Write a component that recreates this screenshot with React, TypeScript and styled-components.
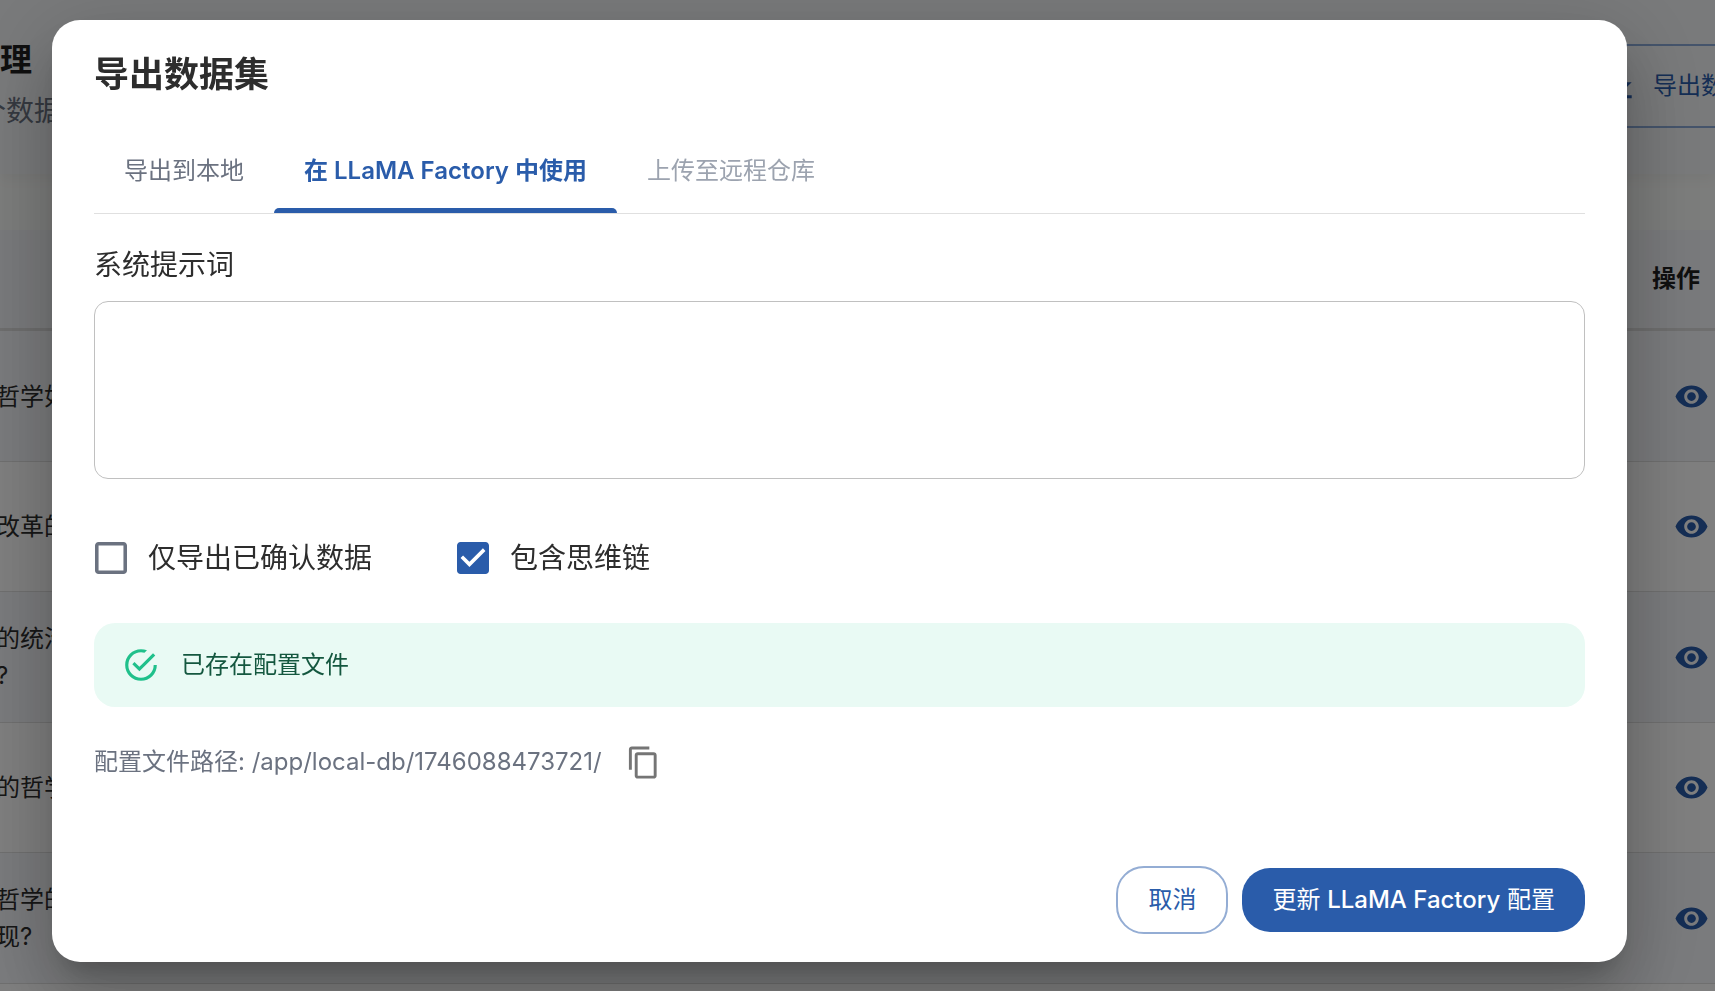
import React, { useState } from "react";
import styled, { createGlobalStyle } from "styled-components";

const fonts = `Inter, "Noto Sans CJK SC", sans-serif`;
const primary = "#2a5caa";

const GlobalStyle = createGlobalStyle`
  *, *::before, *::after { box-sizing: border-box; }
  body {
    margin: 0;
    background: #f9faf8;
    color: #2d2d2d;
    font-family: ${fonts};
    font-size: 24px;
    line-height: 36px;
    overflow: hidden;
  }
  button, input, textarea { font-family: inherit; line-height: inherit; }
`;

/* ---------- page behind the dialog ---------- */

const Page = styled.main`
  height: 100vh;
  overflow: hidden;
`;

const PageHeader = styled.header`
  display: flex;
  justify-content: space-between;
  align-items: flex-start;
  height: 174px;
  background: #f2f4f6;
  box-shadow: 0 4px 14px rgba(0, 0, 0, 0.05);
`;

const Heading = styled.div`
  display: flex;
  flex-direction: column;
  align-items: flex-end;
  width: 62px;
  padding-top: 36px;
  white-space: nowrap;
`;

const PageTitle = styled.h1`
  width: 62px;
  margin: 0;
  font-size: 32px;
  line-height: 48px;
  font-weight: 700;
  color: #1f1f1f;
`;

const PageSubtitle = styled.p`
  margin: 0;
  font-size: 28px;
  line-height: 54px;
  color: #6b7280;
`;

const HeaderAction = styled.button`
  display: flex;
  align-items: center;
  gap: 14px;
  width: 140px;
  height: 84px;
  margin: 44px 0 0;
  padding: 0 0 0 27px;
  border: solid #8aa8d6;
  border-width: 2px 0 2px 2px;
  border-radius: 21px 0 0 21px;
  background: transparent;
  color: ${primary};
  font-size: 24px;
  white-space: nowrap;
  overflow: hidden;

  svg { flex: none; }
`;

const DataTable = styled.table`
  width: calc(100% + 4px);
  margin: 56px 0 0 -4px;
  border-collapse: separate;
  border-spacing: 0;
  table-layout: fixed;
`;

const HeadCell = styled.th`
  height: 101px;
  padding: 0 0 0 28px;
  border-bottom: 3px solid #dcdcdc;
  background: #f3f5f8;
  text-align: left;
  font-weight: 700;
  color: #1f1f1f;
`;

const ActionHeadCell = styled(HeadCell)`
  width: 91px;
`;

const Row = styled.tr`
  height: 130px;
  background: #ffffff;

  &:nth-child(odd) {
    height: 131px;
    background: #f5f7fa;
  }
`;

const Cell = styled.td`
  padding: 0;
  border-bottom: 1px solid #dfdfdf;
  line-height: 37px;
`;

const ActionCell = styled(Cell)`
  padding-left: 41px;
`;

const RowButton = styled.button`
  display: flex;
  padding: 9px 0 9px 9px;
  border: 0;
  background: transparent;
  color: ${primary};

  svg { flex: none; }
`;

/* ---------- dialog ---------- */

const Overlay = styled.div`
  position: fixed;
  inset: 0;
  padding: 20px 88px 0 52px;
  background: rgba(0, 0, 0, 0.5);
`;

const Dialog = styled.section`
  display: flex;
  flex-direction: column;
  padding: 28px 42px;
  border-radius: 28px;
  background: #ffffff;
  box-shadow:
    0 19px 26px -12px rgba(0, 0, 0, 0.2),
    0 42px 66px 5px rgba(0, 0, 0, 0.14),
    0 16px 80px 14px rgba(0, 0, 0, 0.12);
`;

const DialogTitle = styled.h2`
  margin: 0 0 29px;
  font-size: 35px;
  line-height: 52px;
  font-weight: 700;
`;

const Tabs = styled.div`
  display: flex;
  margin-bottom: 30px;
  border-bottom: 1px solid #e0e0e0;
`;

const Tab = styled.button<{ $active?: boolean }>`
  position: relative;
  height: 84px;
  padding: 0 30px;
  border: 0;
  background: transparent;
  font-size: 24px;
  font-weight: ${(p) => (p.$active ? 600 : 400)};
  color: ${(p) => (p.$active ? primary : "#6b7280")};

  &:disabled { color: #9ca3af; }

  &::after {
    content: "";
    display: ${(p) => (p.$active ? "block" : "none")};
    position: absolute;
    left: 0;
    right: 0;
    bottom: 0;
    height: 5px;
    border-radius: 5px 5px 0 0;
    background: ${primary};
  }
`;

const FieldLabel = styled.label`
  margin-bottom: 15px;
  font-size: 28px;
  line-height: 42px;
`;

const PromptInput = styled.textarea`
  display: block;
  width: 100%;
  height: 178px;
  padding: 14px 24px;
  border: 1px solid #c0c0c0;
  border-radius: 14px;
  background: #ffffff;
  color: inherit;
  font-size: 28px;
  resize: none;
`;

const Options = styled.div`
  display: flex;
  gap: 85px;
  margin: 58px 0 44px;
  padding-left: 1px;
`;

const Option = styled.label`
  display: flex;
  align-items: center;
  gap: 21px;
  font-size: 28px;
  line-height: 42px;
`;

const CheckHolder = styled.span`
  position: relative;
  display: flex;
`;

const CheckInput = styled.input`
  appearance: none;
  width: 32px;
  height: 32px;
  margin: 0;
`;

const CheckMark = styled.svg<{ $checked: boolean }>`
  position: absolute;
  inset: 0;
  color: ${(p) => (p.$checked ? primary : "#6b7280")};
  pointer-events: none;
`;

const Alert = styled.div`
  display: flex;
  align-items: center;
  gap: 21px;
  height: 84px;
  padding: 0 28px;
  border-radius: 21px;
  background: #e9faf4;
  color: #14573f;

  svg { color: #20c08b; }
`;

const PathRow = styled.div`
  display: flex;
  align-items: center;
  gap: 24px;
  height: 56px;
  margin: 27px 0 76px;
  color: #6b7280;
`;

const CopyButton = styled.button`
  display: flex;
  padding: 9px 0;
  border: 0;
  background: transparent;
  color: #757575;
`;

const Footer = styled.footer`
  display: flex;
  justify-content: flex-end;
  align-items: center;
  gap: 14px;
`;

const FooterButton = styled.button`
  height: 68px;
  padding: 0 30px;
  border: 2px solid #94add4;
  border-radius: 28px;
  background: #ffffff;
  color: ${primary};
  font-size: 24px;
`;

const PrimaryButton = styled(FooterButton)`
  height: 64px;
  border: 0;
  background: ${primary};
  color: #ffffff;
`;

const ProductName = styled.span`
  font-weight: 500;
`;

type IconProps = { d: string; size: number };

const Icon = ({ d, size }: IconProps) => (
  <svg width={size} height={size} viewBox="0 0 24 24" fill="currentColor" aria-hidden="true">
    <path d={d} />
  </svg>
);

const icons = {
  download: "M19 9h-4V3H9v6H5l7 7 7-7zM5 18v2h14v-2H5z",
  eye: "M12 4.5C7 4.5 2.73 7.61 1 12c1.73 4.39 6 7.5 11 7.5s9.27-3.11 11-7.5c-1.73-4.39-6-7.5-11-7.5zM12 17c-2.76 0-5-2.24-5-5s2.24-5 5-5 5 2.24 5 5-2.24 5-5 5zm0-8c-1.66 0-3 1.34-3 3s1.34 3 3 3 3-1.34 3-3-1.34-3-3-3z",
  success:
    "M20,12A8,8 0 0,1 12,20A8,8 0 0,1 4,12A8,8 0 0,1 12,4C12.76,4 13.5,4.11 14.2, 4.31L15.77,2.74C14.61,2.26 13.34,2 12,2A10,10 0 0,0 2,12A10,10 0 0,0 12,22A10,10 0 0, 0 22,12M7.91,10.08L6.5,11.5L11,16L21,6L19.59,4.58L11,13.17L7.91,10.08Z",
  copy: "M16 1H4c-1.1 0-2 .9-2 2v14h2V3h12V1zm3 4H8c-1.1 0-2 .9-2 2v14c0 1.1.9 2 2 2h11c1.1 0 2-.9 2-2V7c0-1.1-.9-2-2-2zm0 16H8V7h11v14z",
  boxEmpty:
    "M19 5v14H5V5h14m0-2H5c-1.1 0-2 .9-2 2v14c0 1.1.9 2 2 2h14c1.1 0 2-.9 2-2V5c0-1.1-.9-2-2-2z",
  boxChecked:
    "M19 3H5c-1.11 0-2 .9-2 2v14c0 1.1.89 2 2 2h14c1.11 0 2-.9 2-2V5c0-1.1-.89-2-2-2zm-9 14l-5-5 1.41-1.41L10 14.17l7.59-7.59L19 8l-9 9z",
};

type CheckOptionProps = {
  label: string;
  checked: boolean;
  onChange: (next: boolean) => void;
};

const CheckOption = ({ label, checked, onChange }: CheckOptionProps) => (
  <Option>
    <CheckHolder>
      <CheckInput type="checkbox" checked={checked} onChange={(e) => onChange(e.target.checked)} />
      <CheckMark $checked={checked} width="32" height="32" viewBox="3 3 18 18" fill="currentColor" aria-hidden="true">
        <path d={checked ? icons.boxChecked : icons.boxEmpty} />
      </CheckMark>
    </CheckHolder>
    {label}
  </Option>
);

const rows: string[][] = [["哲学如"], ["改革的"], ["的统治", "?"], ["的哲学"], ["哲学的", "现?"], [""]];

export default function App() {
  const [prompt, setPrompt] = useState("");
  const [confirmedOnly, setConfirmedOnly] = useState(false);
  const [includeCot, setIncludeCot] = useState(true);

  return (
    <>
      <GlobalStyle />
      <Page>
        <PageHeader>
          <Heading>
            <PageTitle>理</PageTitle>
            <PageSubtitle>个数据</PageSubtitle>
          </Heading>
          <HeaderAction type="button">
            <Icon d={icons.download} size={35} />
            导出数
          </HeaderAction>
        </PageHeader>
        <DataTable>
          <thead>
            <tr>
              <HeadCell />
              <ActionHeadCell>操作</ActionHeadCell>
            </tr>
          </thead>
          <tbody>
            {rows.map((lines, i) => (
              <Row key={i}>
                <Cell>
                  {lines.map((line) => (
                    <div key={line}>{line}</div>
                  ))}
                </Cell>
                <ActionCell>
                  <RowButton type="button">
                    <Icon d={icons.eye} size={35} />
                  </RowButton>
                </ActionCell>
              </Row>
            ))}
          </tbody>
        </DataTable>
      </Page>

      <Overlay>
        <Dialog role="dialog" aria-modal="true" aria-labelledby="export-title">
          <DialogTitle id="export-title">导出数据集</DialogTitle>
          <Tabs role="tablist">
            <Tab type="button" role="tab">导出到本地</Tab>
            <Tab type="button" role="tab" aria-selected="true" $active>
              在 LLaMA Factory 中使用
            </Tab>
            <Tab type="button" role="tab" disabled>上传至远程仓库</Tab>
          </Tabs>

          <FieldLabel htmlFor="system-prompt">系统提示词</FieldLabel>
          <PromptInput id="system-prompt" value={prompt} onChange={(e) => setPrompt(e.target.value)} />

          <Options>
            <CheckOption label="仅导出已确认数据" checked={confirmedOnly} onChange={setConfirmedOnly} />
            <CheckOption label="包含思维链" checked={includeCot} onChange={setIncludeCot} />
          </Options>

          <Alert role="status">
            <Icon d={icons.success} size={38} />
            已存在配置文件
          </Alert>

          <PathRow>
            <span>配置文件路径: /app/local-db/1746088473721/</span>
            <CopyButton type="button" aria-label="复制">
              <Icon d={icons.copy} size={35} />
            </CopyButton>
          </PathRow>

          <Footer>
            <FooterButton type="button">取消</FooterButton>
            <PrimaryButton type="button">
              更新 <ProductName>LLaMA Factory</ProductName> 配置
            </PrimaryButton>
          </Footer>
        </Dialog>
      </Overlay>
    </>
  );
}
